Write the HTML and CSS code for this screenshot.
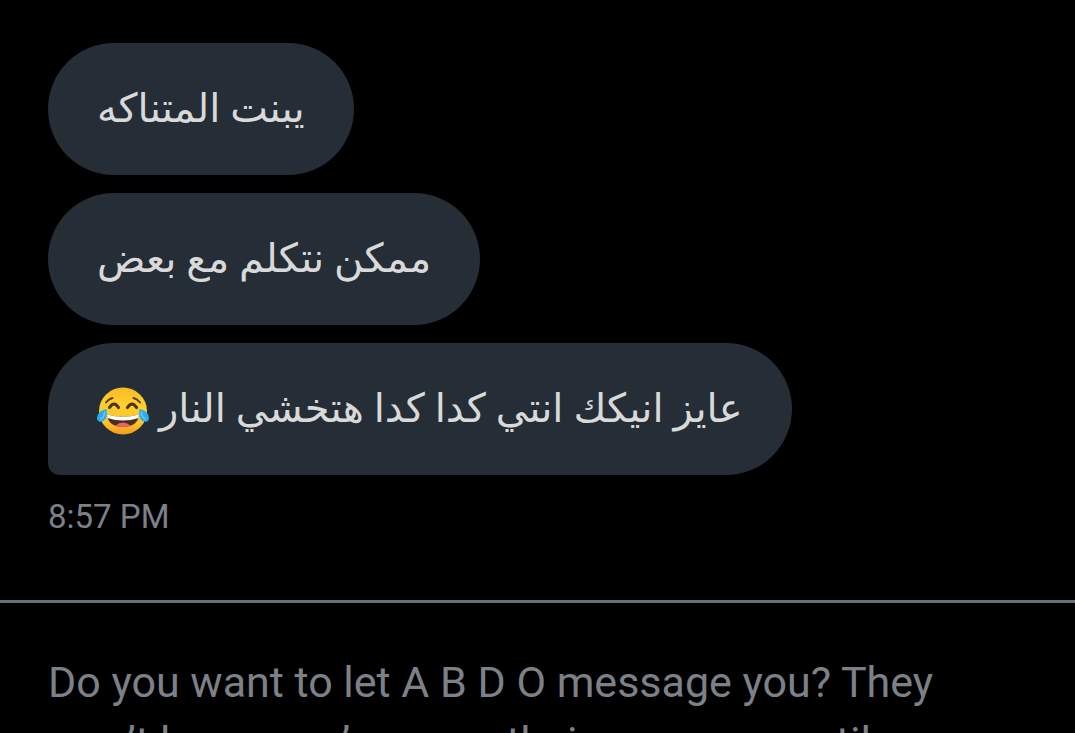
FILE: index.html
```html
<!DOCTYPE html>
<html lang="en">
<head>
<meta charset="utf-8">
<meta name="viewport" content="width=device-width, initial-scale=1">
<title>Message request</title>
<link rel="stylesheet" href="styles.css">
</head>
<body>
<main class="conversation">
  <section class="thread" aria-label="Messages">
    <p class="bubble" lang="ar" dir="rtl">يبنت المتناكه</p>
    <p class="bubble" lang="ar" dir="rtl">ممكن نتكلم مع بعض</p>
    <p class="bubble bubble-last" lang="ar" dir="rtl">عايز انيكك انتي كدا كدا هتخشي النار <svg class="emoji" viewBox="0 0 52 48" role="img" aria-label="Face with tears of joy">
      <defs>
        <linearGradient id="face" x1="0" y1="0" x2="0" y2="1">
          <stop offset="0" stop-color="#fbb924"/>
          <stop offset="0.35" stop-color="#fdd02f"/>
          <stop offset="0.75" stop-color="#fcc52c"/>
          <stop offset="1" stop-color="#f39a1c"/>
        </linearGradient>
      </defs>
      <ellipse cx="26" cy="24" rx="24" ry="23.5" fill="url(#face)"/>
      <path d="M9 15.500Q11.500 12 15.500 11M43 15.500Q40.500 12 36.500 11" fill="none" stroke="#5d3d16" stroke-width="2" stroke-linecap="round"/>
      <path d="M12.500 20.500Q17 13.500 21.500 20.500M30.500 20.500Q35 13.500 39.500 20.500" fill="none" stroke="#4c3419" stroke-width="3.200" stroke-linecap="round"/>
      <path d="M10 27.500Q26 32 42 27.500Q41 39.500 26 40Q11 39.500 10 27.500Z" fill="#4e2c20"/>
      <path d="M10 27.500Q26 32 42 27.500L41.500 31Q26 36 10.500 31Z" fill="#fff"/>
      <path d="M18.500 38.500Q26 32.500 33.500 38.500Q26 41.500 18.500 38.500Z" fill="#ef6166"/>
      <path d="M9.500 22Q11 31.500 6.500 34Q0.500 36.500 0 31Q0.500 24 9.500 22ZM42.500 22Q41 31.500 45.500 34Q51.500 36.500 52 31Q51.500 24 42.500 22Z" fill="#2dabf0"/>
      <path d="M7.500 25Q7.500 30 4 32M44.500 25Q44.500 30 48 32" fill="none" stroke="#62cbf8" stroke-width="1.500" stroke-linecap="round"/>
    </svg></p>
    <time class="sent-at" datetime="20:57">8:57 PM</time>
  </section>
  <section class="request">
    <p class="request-text">Do you want to let A B D O message you? They won’t know you’ve seen their message until you accept.</p>
  </section>
</main>
</body>
</html>
```

FILE: styles.css
```css
* {
  box-sizing: border-box;
}

body {
  margin: 0;
  background: #000;
  color: #d9d9d9;
  font-family: Roboto, "Noto Sans", "DejaVu Sans", sans-serif;
}

.conversation {
  height: 100vh;
  overflow: hidden;
}

.thread {
  display: flex;
  flex-direction: column;
  align-items: flex-start;
  gap: 18px;
  padding: 43px 48px 59px;
}

.bubble {
  margin: 0;
  padding: 36px 49px;
  border-radius: 66px;
  background: #252e36;
  font-size: 40px;
  line-height: 60px;
}

.bubble-last {
  border-bottom-left-radius: 12px;
}

.emoji {
  width: 52px;
  height: 48px;
  vertical-align: -13px;
}

.sent-at {
  color: #7c8188;
  font-size: 33px;
  line-height: 48px;
}

.request {
  padding: 49px 48px;
  border-top: 3px solid #66717a;
}

.request-text {
  margin: 0;
  color: #7c8188;
  font-size: 43px;
  line-height: 60px;
}
```
